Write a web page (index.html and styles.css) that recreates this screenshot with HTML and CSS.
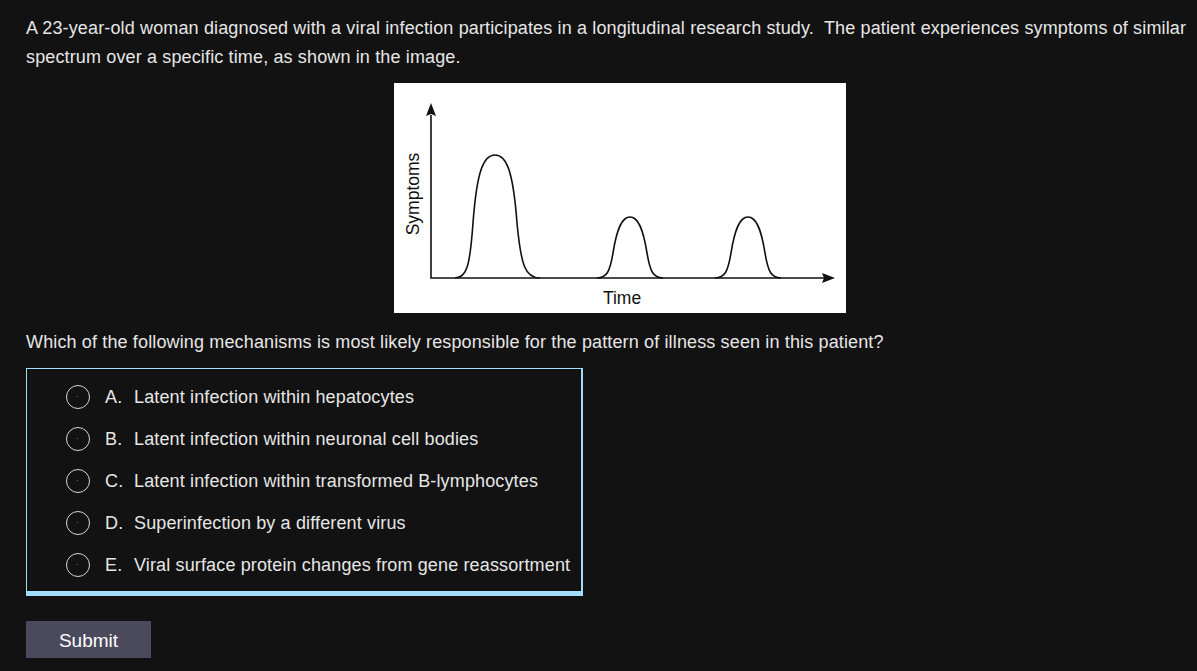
FILE: index.html
```html
<!DOCTYPE html>
<html lang="en">
<head>
<meta charset="utf-8">
<title>Question</title>
<link rel="stylesheet" href="styles.css">
</head>
<body>
<main class="page">
  <p class="stem">A 23-year-old woman diagnosed with a viral infection participates in a longitudinal research study.&nbsp; The patient experiences symptoms of similar spectrum over a specific time, as shown in the image.</p>
  <div class="figure">
    <svg class="chart" width="452" height="230" viewBox="0 0 452 230" xmlns="http://www.w3.org/2000/svg">
      <rect width="452" height="230" fill="#ffffff"/>
      <g fill="none" stroke="#111" stroke-width="1.6">
        <path d="M37,32 L37,195 L430,195"/>
        <path d="M61,195 C73,195 76,182 79,140 C83,86 90,72 101,72 C112,72 119,86 123,140 C127,182 131,195 146,195"/>
        <path d="M203,195 C213,195 216,188 219,170 C223,145 228,134 236,134 C244,134 249,145 253,170 C256,188 259,195 269,195"/>
        <path d="M321,195 C331,195 334,188 337,170 C341,145 346,134 354,134 C362,134 367,145 371,170 C374,188 377,195 387,195"/>
      </g>
      <path d="M37,20 L42,33 L37,31 L32,33 Z" fill="#111"/>
      <path d="M441,195 L428,190 L430,195 L428,200 Z" fill="#111"/>
      <text x="228" y="221" class="axis-label" text-anchor="middle">Time</text>
      <text class="axis-label" text-anchor="middle" transform="translate(25,111) rotate(-90)">Symptoms</text>
    </svg>
  </div>
  <p class="question">Which of the following mechanisms is most likely responsible for the pattern of illness seen in this patient?</p>
  <div class="choices">
    <label class="choice"><span class="radio"></span><span class="letter">A.</span><span>Latent infection within hepatocytes</span></label>
    <label class="choice"><span class="radio"></span><span class="letter">B.</span><span>Latent infection within neuronal cell bodies</span></label>
    <label class="choice"><span class="radio"></span><span class="letter">C.</span><span>Latent infection within transformed B-lymphocytes</span></label>
    <label class="choice"><span class="radio"></span><span class="letter">D.</span><span>Superinfection by a different virus</span></label>
    <label class="choice"><span class="radio"></span><span class="letter">E.</span><span>Viral surface protein changes from gene reassortment</span></label>
  </div>
  <button class="submit" type="button">Submit</button>
</main>
</body>
</html>
```

FILE: styles.css
```css
html, body {
  margin: 0;
  padding: 0;
  background: #121212;
}
body {
  font-family: "Liberation Sans", Arial, sans-serif;
  color: #e6e6e6;
  font-size: 18px;
  letter-spacing: 0.14px;
}
.page {
  padding: 14px 0 0 26px;
  display: flex;
  flex-direction: column;
  align-items: flex-start;
}
.stem {
  margin: 0;
  line-height: 29px;
  padding-right: 4px;
}
.figure {
  margin: 11px 0 0 368px;
  line-height: 0;
}
.chart {
  display: block;
}
.axis-label {
  font-family: "Liberation Sans", Arial, sans-serif;
  font-size: 17.5px;
  letter-spacing: 0;
  fill: #111;
}
.question {
  margin: 15px 0 0 0;
  line-height: 29px;
}
.choices {
  margin-top: 11px;
  box-sizing: border-box;
  width: 557px;
  border: 1px solid #a3dcff;
  border-right-width: 2px;
  border-bottom-width: 5px;
  padding: 7px 0 5px 39px;
  display: flex;
  flex-direction: column;
}
.choice {
  display: flex;
  align-items: center;
  height: 42px;
  white-space: nowrap;
}
.radio {
  box-sizing: border-box;
  width: 24px;
  height: 24px;
  border: 1.5px solid #d6d6d6;
  border-radius: 50%;
  margin-right: 15px;
  position: relative;
  flex: none;
}
.radio::after {
  content: "";
  position: absolute;
  left: 10px;
  top: 10px;
  width: 1px;
  height: 1px;
  background: #3a7fa0;
}
.letter {
  display: inline-block;
  width: 29px;
}
.submit {
  margin-top: 25px;
  width: 125px;
  height: 37px;
  border: none;
  background: #4a4a5c;
  color: #ffffff;
  font-family: "Liberation Sans", Arial, sans-serif;
  font-size: 19px;
  letter-spacing: 0;
  padding: 2px 0 0 0;
  cursor: pointer;
}
```
